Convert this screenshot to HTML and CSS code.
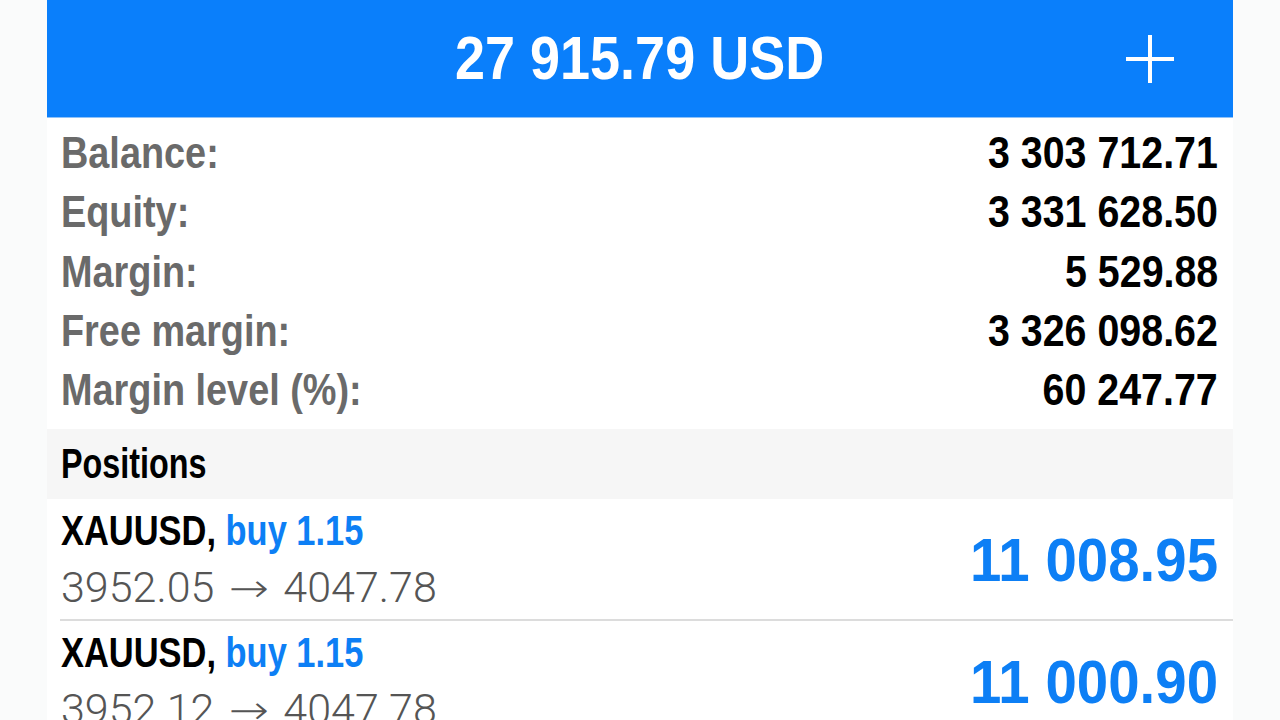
FILE: index.html
```html
<!DOCTYPE html>
<html lang="en">
<head>
<meta charset="utf-8">
<title>Trade</title>
<link rel="stylesheet" href="styles.css">
</head>
<body>
<div class="panel">
  <header class="header">
    <div class="header-side"></div>
    <div class="title"><span class="cond c-title">27 915.79 USD</span></div>
    <div class="header-side header-right">
      <svg class="plus" width="48" height="48" viewBox="0 0 48 48"><path d="M24 0V48M0 24H48" stroke="#fff" stroke-width="4" fill="none"/></svg>
    </div>
  </header>

  <section class="summary">
    <div class="row"><span class="cond label">Balance:</span><span class="cond value">3 303 712.71</span></div>
    <div class="row"><span class="cond label">Equity:</span><span class="cond value">3 331 628.50</span></div>
    <div class="row"><span class="cond label">Margin:</span><span class="cond value">5 529.88</span></div>
    <div class="row"><span class="cond label">Free margin:</span><span class="cond value">3 326 098.62</span></div>
    <div class="row"><span class="cond label">Margin level (%):</span><span class="cond value">60 247.77</span></div>
  </section>

  <div class="section-head"><span class="cond c-section">Positions</span></div>

  <section class="positions">
    <div class="pos">
      <div class="pos-info">
        <div class="pos-line1"><span class="cond c-sym">XAUUSD, <span class="blue">buy 1.15</span></span></div>
        <div class="pos-line2">3952.05 <span class="arrow">→</span> 4047.78</div>
      </div>
      <span class="cond profit">11 008.95</span>
    </div>
    <div class="pos">
      <div class="pos-info">
        <div class="pos-line1"><span class="cond c-sym">XAUUSD, <span class="blue">buy 1.15</span></span></div>
        <div class="pos-line2">3952.12 <span class="arrow">→</span> 4047.78</div>
      </div>
      <span class="cond profit">11 000.90</span>
    </div>
  </section>
</div>
</body>
</html>
```

FILE: styles.css
```css
html, body {
  margin: 0;
  padding: 0;
}
body {
  background: #fafbfb;
  font-family: "Liberation Sans", Arial, sans-serif;
  overflow: hidden;
  height: 720px;
}
.panel {
  width: 1186px;
  margin: 0 auto;
  background: #ffffff;
  min-height: 720px;
}
.cond {
  display: inline-block;
  font-weight: 700;
  white-space: nowrap;
}
.header {
  height: 117px;
  background: #0a7ffb;
  border-bottom: 1px solid #8fc2f8;
  display: grid;
  grid-template-columns: 1fr auto 1fr;
  align-items: center;
}
.title {
  color: #ffffff;
  font-size: 61px;
  line-height: 117px;
}
.c-title {
  transform: scaleX(0.885);
  transform-origin: center;
}
.header-right {
  display: flex;
  justify-content: flex-end;
  padding-right: 59px;
}
.plus {
  display: block;
}
.summary {
  padding: 5px 15px 10px 14px;
}
.row {
  height: 59.25px;
  display: flex;
  justify-content: space-between;
  align-items: center;
  font-size: 44px;
  line-height: 59px;
}
.label {
  color: #6a6a6a;
  transform: scaleX(0.86);
  transform-origin: left center;
}
.value {
  color: #000000;
  transform: scaleX(0.895);
  transform-origin: right center;
}
.section-head {
  background: #f6f6f6;
  height: 70px;
  line-height: 70px;
  padding-left: 14px;
  font-size: 42px;
  color: #000;
}
.c-section {
  transform: scaleX(0.77);
  transform-origin: left center;
}
.positions {
  padding-left: 13px;
}
.pos {
  display: flex;
  justify-content: space-between;
  align-items: center;
  border-bottom: 2px solid #dcdcdc;
  padding: 4px 15px 3px 1px;
}
.pos-line1 {
  font-size: 42px;
  line-height: 56px;
  color: #000;
}
.c-sym {
  transform: scaleX(0.82);
  transform-origin: left center;
}
.blue {
  color: #0d7ff5;
}
.pos-line2 {
  font-family: Roboto, "Liberation Sans", sans-serif;
  font-weight: 300;
  font-size: 43px;
  line-height: 56px;
  color: #555555;
  white-space: nowrap;
}
.arrow {
  display: inline-block;
  width: 48px;
  text-align: center;
  font-family: "DejaVu Sans", sans-serif;
  font-weight: 200;
  font-size: 40px;
  transform: scaleX(1.2);
}
.profit {
  color: #0d7ff5;
  font-size: 61px;
  line-height: 70px;
  transform: scaleX(0.925);
  transform-origin: right center;
}
```
